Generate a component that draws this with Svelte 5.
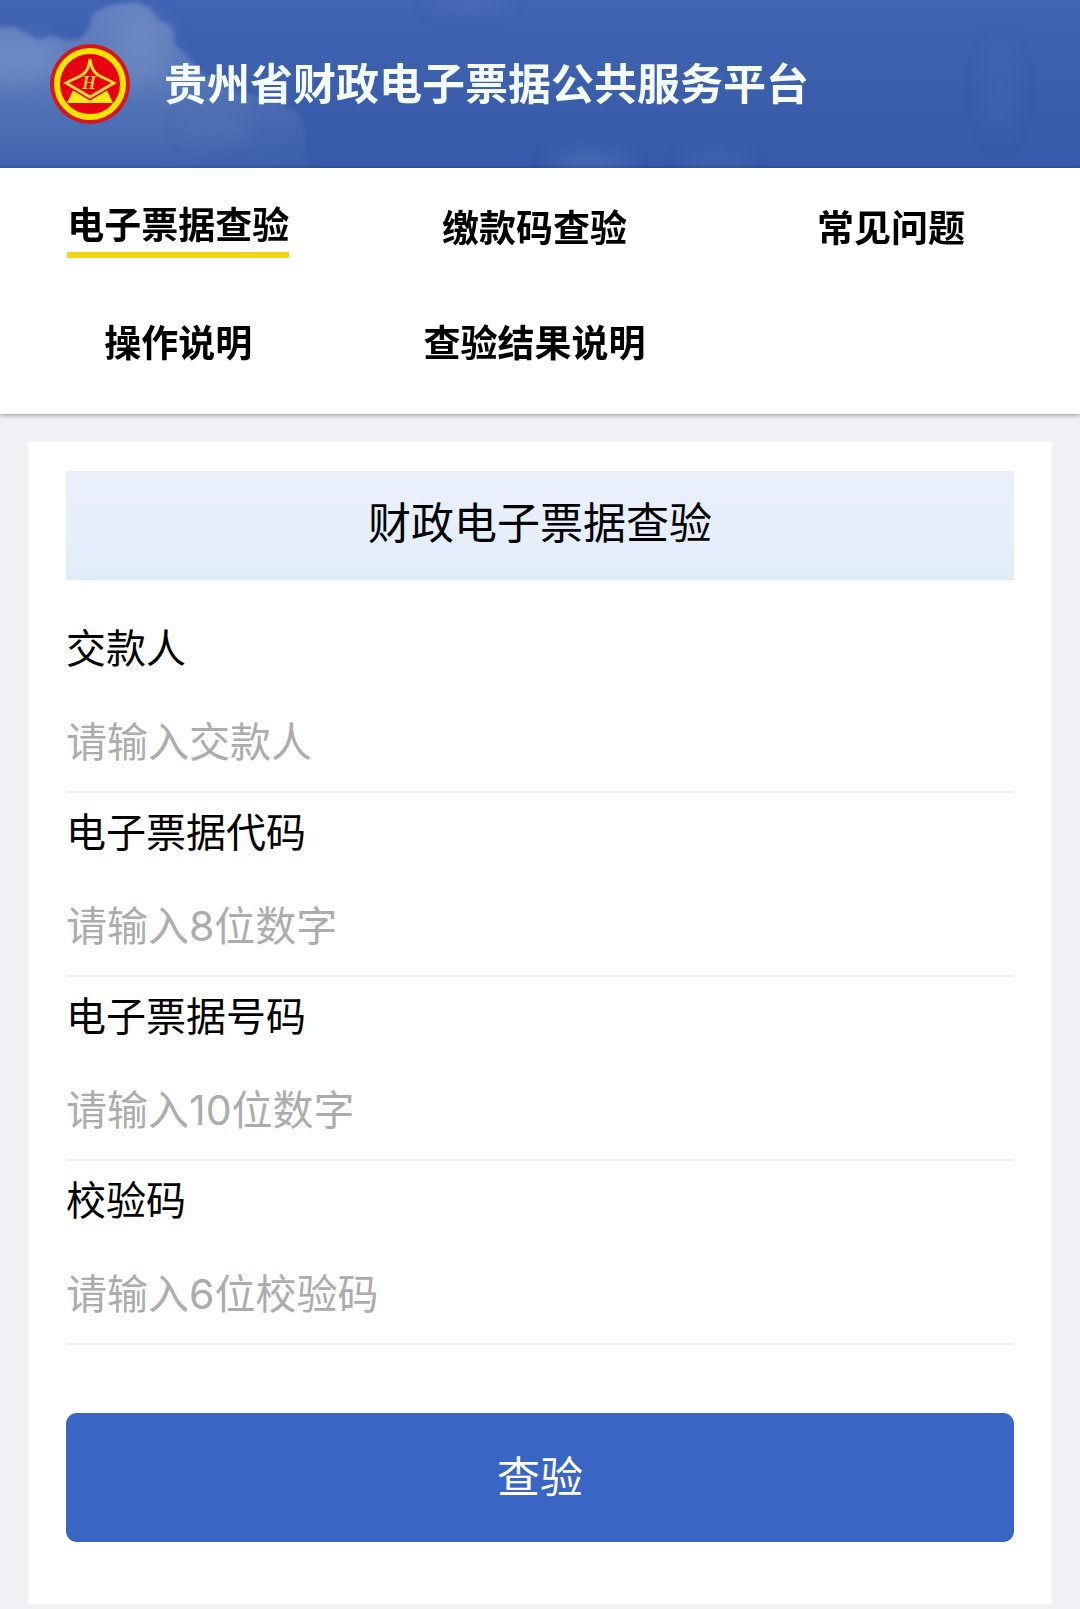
<script lang="ts">
	let activeTab = $state('check');

	const tabs = [
		{ id: 'check', name: '电子票据查验' },
		{ id: 'payment', name: '缴款码查验' },
		{ id: 'faq', name: '常见问题' },
		{ id: 'guide', name: '操作说明' },
		{ id: 'result', name: '查验结果说明' }
	];

	const fields = [
		{ id: 'payer', label: '交款人', placeholder: '请输入交款人' },
		{ id: 'code', label: '电子票据代码', placeholder: '请输入8位数字' },
		{ id: 'number', label: '电子票据号码', placeholder: '请输入10位数字' },
		{ id: 'verify', label: '校验码', placeholder: '请输入6位校验码' }
	];

	let values: Record<string, string> = $state({ payer: '', code: '', number: '', verify: '' });

	function submit(event: SubmitEvent) {
		event.preventDefault();
	}
</script>

<div class="page">
	<header class="header">
		<svg class="sky" viewBox="0 0 1080 168" preserveAspectRatio="none" aria-hidden="true">
			<defs>
				<linearGradient id="cloud" x1="0" y1="0" x2="0" y2="1">
					<stop offset="0" stop-color="#7c97cb" stop-opacity="0.6" />
					<stop offset="0.5" stop-color="#6f8cc4" stop-opacity="0.55" />
					<stop offset="1" stop-color="#5474b6" stop-opacity="0.35" />
				</linearGradient>
				<linearGradient id="fade" x1="0" y1="0" x2="1" y2="0">
					<stop offset="0" stop-color="#fff" />
					<stop offset="0.5" stop-color="#fff" />
					<stop offset="1" stop-color="#777" />
				</linearGradient>
				<mask id="edge">
					<rect x="-20" y="-10" width="360" height="190" fill="url(#fade)" />
				</mask>
				<filter id="soft"><feGaussianBlur stdDeviation="2" /></filter>
				<filter id="haze" x="-50%" y="-50%" width="200%" height="200%">
					<feGaussianBlur stdDeviation="10" />
				</filter>
			</defs>
			<g mask="url(#edge)">
				<path
					d="M-10 29 L12 26 L28 34 L38 40 L52 36 L66 40 L80 39 L90 28 L92 15 L106 6 L120 4 L136 2 L150 8 L160 21 L173 27 L175 45 L188 56 L200 72 L226 88 L262 98 L282 104 L300 114 L305 134 L304 152 L314 175 L-10 175 Z"
					fill="url(#cloud)"
					filter="url(#soft)"
				/>
			</g>
			<g filter="url(#haze)">
				<ellipse cx="14" cy="60" rx="50" ry="24" fill="#8ba3d1" opacity="0.35" />
				<ellipse cx="140" cy="50" rx="30" ry="36" fill="#8099cc" opacity="0.35" />
				<ellipse cx="215" cy="128" rx="34" ry="14" fill="#6f8cc6" opacity="0.2" />
				<ellipse cx="590" cy="162" rx="40" ry="8" fill="#7590c8" opacity="0.4" />
				<ellipse cx="716" cy="160" rx="34" ry="8" fill="#6482c2" opacity="0.3" />
				<ellipse cx="1000" cy="90" rx="14" ry="50" fill="#5573bc" opacity="0.2" />
				<ellipse cx="470" cy="2" rx="40" ry="8" fill="#6380c3" opacity="0.3" />
			</g>
		</svg>
		<svg class="logo" viewBox="0 0 80 80" role="img" aria-label="财政徽标">
			<circle cx="40" cy="40" r="40" fill="#d8141c" />
			<circle cx="40" cy="40" r="33" fill="#e60012" stroke="#ffe400" stroke-width="6" />
			<path d="M24 44 L40 54 L56 44 L63 59 H17 Z" fill="#ffe81a" />
			<path
				d="M40 15 C41 23 43 28 48 31 C53 34 59 36 64 39 L40 53 L16 39 C21 36 27 34 32 31 C37 28 39 23 40 15 Z"
				fill="#e60012"
				stroke="#e60012"
				stroke-width="6"
			/>
			<path
				d="M40 15 C41 23 43 28 48 31 C53 34 59 36 64 39 L40 53 L16 39 C21 36 27 34 32 31 C37 28 39 23 40 15 Z"
				fill="#e60012"
				stroke="#ffd92e"
				stroke-width="3"
			/>
			<text class="mark" x="39" y="45" text-anchor="middle">H</text>
		</svg>
		<h1>贵州省财政电子票据公共服务平台</h1>
	</header>

	<nav class="tabs">
		{#each tabs as tab}
			<button
				class="tab"
				class:active={activeTab === tab.id}
				onclick={() => (activeTab = tab.id)}
				type="button"
			>
				<span>{tab.name}</span>
			</button>
		{/each}
	</nav>

	<main class="card">
		<h2>财政电子票据查验</h2>

		<form onsubmit={submit}>
			{#each fields as field}
				<div class="field">
					<label for={field.id}>{field.label}</label>
					<input
						id={field.id}
						type="text"
						placeholder={field.placeholder}
						autocomplete="off"
						bind:value={values[field.id]}
					/>
				</div>
			{/each}

			<button class="submit" type="submit">查验</button>
		</form>
	</main>
</div>

<style>
	:global(body) {
		margin: 0;
		background: #eff1f5;
	}

	.page {
		padding-bottom: 5px;
		font-family: Inter, 'Noto Sans CJK SC', sans-serif;
		color: #000;
	}

	.header {
		position: relative;
		display: flex;
		align-items: center;
		gap: 34px;
		height: 168px;
		padding: 0 50px;
		box-sizing: border-box;
		background: linear-gradient(#4164b4, #3b5fab 50%, #365aa9);
		overflow: hidden;
	}

	.sky {
		position: absolute;
		inset: 0;
		width: 100%;
		height: 100%;
	}

	.logo {
		position: relative;
		flex: none;
		width: 80px;
		height: 80px;
	}

	.mark {
		fill: #ffc83c;
		font-family: 'Liberation Serif', serif;
		font-size: 18px;
		font-style: italic;
		font-weight: 700;
	}

	.header h1 {
		position: relative;
		margin: 0;
		font-size: 43px;
		font-weight: 700;
		line-height: 64px;
		color: #f5fcff;
	}

	.tabs {
		position: relative;
		display: grid;
		grid-template-columns: repeat(3, 33%);
		grid-auto-rows: 115px;
		padding: 3px 0 13px;
		background: #fff;
		box-shadow: 0 1px 5px rgba(0, 0, 0, 0.4);
	}

	.tab {
		padding: 0;
		border: none;
		background: none;
		font: inherit;
		font-size: 37px;
		font-weight: 700;
		line-height: 52px;
		color: #000;
		cursor: pointer;
	}

	.tab span {
		display: inline-block;
	}

	.tab.active span {
		border-bottom: 6px solid #f5d614;
	}

	.card {
		margin: 28px 28px 0;
		padding: 29px 38px 62px;
		background: #fff;
	}

	.card h2 {
		margin: 0 0 29px;
		padding: 20px 0 25px;
		background: linear-gradient(#ebeffc, #e7effc 50%, #e0edf7);
		font-size: 43px;
		font-weight: 400;
		line-height: 64px;
		text-align: center;
	}

	.field {
		display: flex;
		flex-direction: column;
	}

	.field label {
		font-size: 40px;
		font-weight: 400;
		line-height: 80px;
	}

	.field input {
		height: 104px;
		padding: 4px 0 0;
		box-sizing: border-box;
		border: none;
		border-bottom: 2px solid #ebebeb;
		border-radius: 0;
		outline: none;
		background: none;
		font: inherit;
		font-size: 41px;
		font-weight: 400;
		color: #000;
	}

	.field input::placeholder {
		color: #acacac;
		opacity: 1;
	}

	.submit {
		width: 100%;
		height: 129px;
		margin-top: 68px;
		padding: 0 0 8px;
		border: none;
		border-radius: 11px;
		background: #3965c4;
		font: inherit;
		font-size: 43px;
		font-weight: 400;
		color: #fff;
		cursor: pointer;
	}
</style>
